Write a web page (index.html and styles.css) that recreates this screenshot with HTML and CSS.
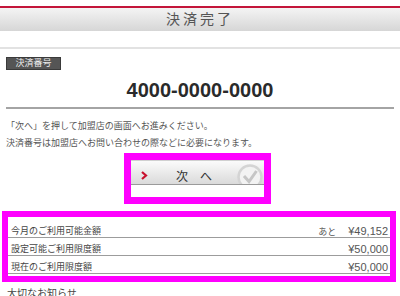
FILE: index.html
```html
<!DOCTYPE html>
<html lang="ja">
<head>
    <meta charset="UTF-8">
    <meta name="viewport" content="width=device-width, initial-scale=1.0">
    <title>決済完了</title>
    <link rel="stylesheet" href="styles.css">
</head>
<body>
    <header class="topbar">
        <h1 class="topbar-title">決済完了</h1>
    </header>
    <div class="subbar"></div>

    <main class="content">
        <span class="label">決済番号</span>
        <p class="receipt-no">4000-0000-0000</p>

        <p class="note">「次へ」を押して加盟店の画面へお進みください。<br>決済番号は加盟店へお問い合わせの際などに必要になります。</p>

        <div class="next-wrap">
            <a class="next-btn" href="#">
                <svg class="next-arrow" width="8" height="9" viewBox="0 0 8 9">
                    <polyline points="2,1 6,4.5 2,8" fill="none" stroke="#c8102e" stroke-width="2.2"/>
                </svg>
                <span class="next-label">次　へ</span>
                <svg class="next-check" width="28" height="26" viewBox="0 0 28 26">
                    <circle cx="14" cy="13" r="11.5" fill="#f3f3f3" stroke="#d4d4d4" stroke-width="2.5"/>
                    <polyline points="8,12 13,17.5 20.5,7" fill="none" stroke="#c6c6c6" stroke-width="3"/>
                </svg>
            </a>
        </div>

        <div class="limits">
            <div class="limit-row">
                <span class="limit-name">今月のご利用可能金額</span>
                <span class="limit-value"><span class="limit-rest">あと</span>¥49,152</span>
            </div>
            <div class="limit-row">
                <span class="limit-name">設定可能ご利用限度額</span>
                <span class="limit-value">¥50,000</span>
            </div>
            <div class="limit-row">
                <span class="limit-name">現在のご利用限度額</span>
                <span class="limit-value">¥50,000</span>
            </div>
        </div>

        <h2 class="notice-title">大切なお知らせ</h2>
    </main>
</body>
</html>
```

FILE: styles.css
```css
body {
    margin: 0;
    background: #fff;
    font-family: "Liberation Sans", "Noto Sans CJK JP", sans-serif;
    color: #444;
}
.topbar {
    margin-top: 6px;
    border-top: 2px solid #c3153a;
    background: linear-gradient(#f4f4f4, #d6d6d6);
}
.topbar-title {
    margin: 0;
    height: 23px;
    line-height: 23px;
    text-align: center;
    font-size: 14px;
    font-weight: normal;
    letter-spacing: 3px;
    color: #555;
}
.subbar {
    height: 16px;
    border-bottom: 2px solid #e2e2e2;
}
.content {
    padding: 0 6px;
}
.label {
    display: inline-block;
    margin-top: 8px;
    width: 53px;
    height: 11px;
    line-height: 11px;
    text-align: center;
    font-size: 9px;
    color: #eee;
    background: #555;
    border: 1px solid #3a3a3a;
}
.receipt-no {
    margin: 8px 0 0;
    padding-bottom: 5px;
    line-height: 24px;
    text-align: center;
    font-size: 20px;
    font-weight: bold;
    color: #2a2a2a;
    border-bottom: 2px solid #a4a4a4;
}
.note {
    margin: 9px 0 0;
    font-size: 9px;
    line-height: 17px;
    color: #555;
}
.next-wrap {
    width: 133px;
    height: 37px;
    margin: 8px 0 0 125px;
    outline: 7px solid #ff00ff;
    background: #fff;
}
.next-btn {
    display: flex;
    align-items: center;
    height: 17px;
    padding-top: 6px;
    overflow: hidden;
    text-decoration: none;
    background: linear-gradient(#fbfbfb, #dadada);
    border-top: 1px solid #d0d0d0;
    border-bottom: 1px solid #9a9a9a;
}
.next-arrow {
    flex: none;
    margin-left: 9px;
}
.next-label {
    flex: 1;
    text-align: center;
    font-size: 12px;
    color: #333;
    padding-left: 4px;
}
.next-check {
    flex: none;
    margin-top: 2px;
}
.limits {
    margin: 20px 4px 0 2px;
    padding: 3px 0 2px;
    outline: 6px solid #ff00ff;
}
.limit-row {
    display: flex;
    justify-content: space-between;
    height: 11px;
    padding: 6px 2px 0 3px;
    line-height: 11px;
    border-bottom: 1px solid #9c9c9c;
}
.limit-name {
    font-size: 9px;
    color: #444;
}
.limit-value {
    font-size: 11px;
    color: #555;
}
.limit-rest {
    font-size: 9px;
    margin-right: 12px;
}
.notice-title {
    margin: 9px 0 0 1px;
    font-size: 10px;
    font-weight: normal;
    color: #444;
}
```
